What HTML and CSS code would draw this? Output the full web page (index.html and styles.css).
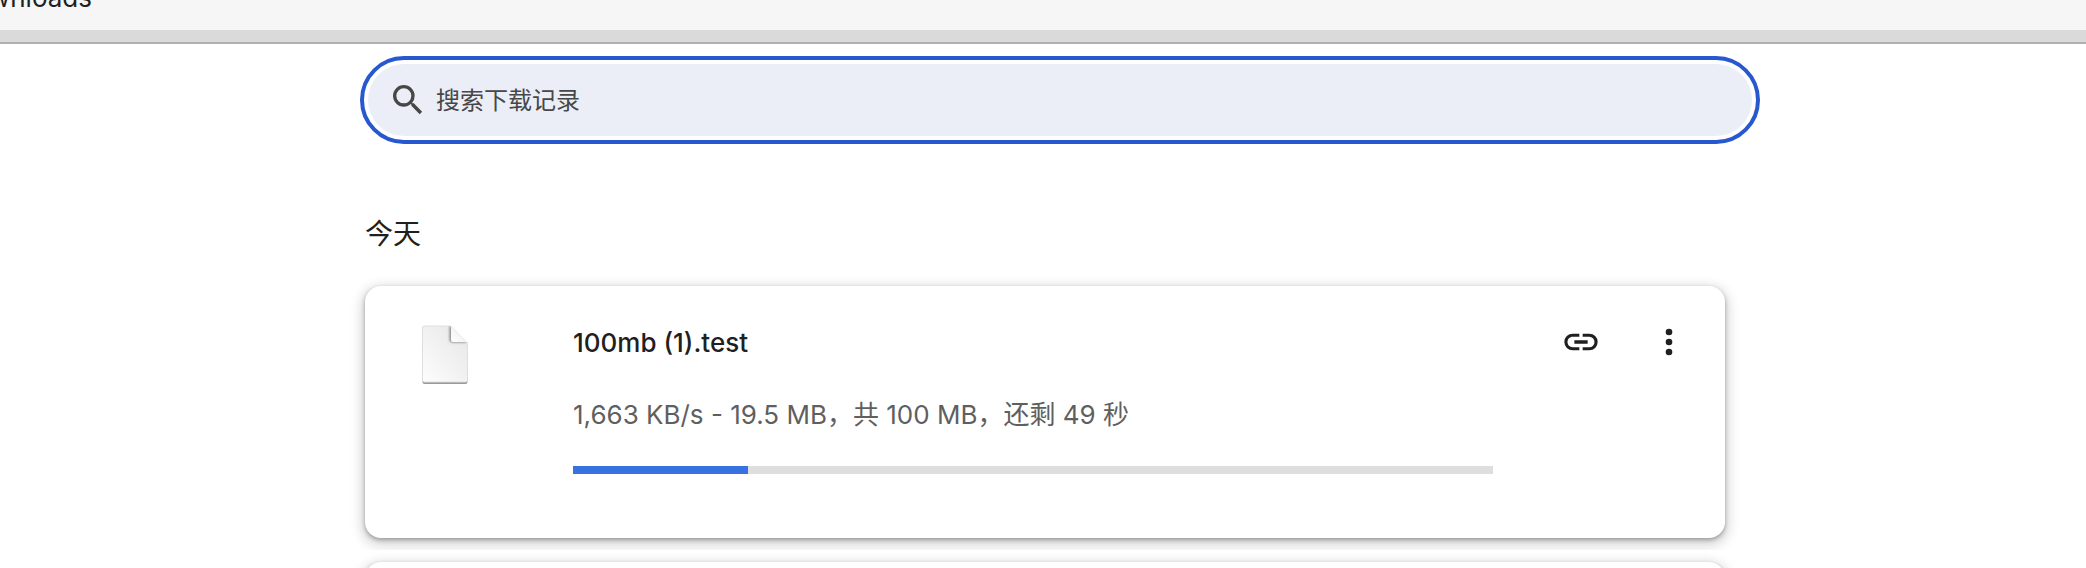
FILE: index.html
```html
<!DOCTYPE html>
<html lang="zh-CN">
<head>
<meta charset="utf-8">
<meta name="viewport" content="width=device-width, initial-scale=1">
<title>下载记录</title>
<link rel="stylesheet" href="styles.css">
</head>
<body>
<header class="address-bar">
  <div class="address"><span>Downloads</span></div>
</header>
<main class="page">
  <div class="toolbar">
    <form class="search" role="search">
      <label class="search-label" for="search" aria-label="搜索下载记录">
        <svg class="icon" viewBox="0 0 24 24" aria-hidden="true"><path d="M15.5 14h-.79l-.28-.27A6.47 6.47 0 0 0 16 9.5 6.5 6.5 0 1 0 9.5 16c1.61 0 3.09-.59 4.23-1.57l.27.28v.79l5 4.99L20.49 19l-4.99-5zm-6 0a4.5 4.5 0 1 1 0-9 4.5 4.5 0 0 1 0 9z"/></svg>
      </label>
      <input class="search-input" id="search" type="text" placeholder="搜索下载记录">
    </form>
  </div>
  <section class="group">
    <div class="item">
      <h2 class="date">今天</h2>
      <article class="card">
        <svg class="file-icon" viewBox="0 0 64 64" aria-hidden="true">
          <defs>
            <linearGradient id="paper" x1="0" y1="1" x2="1" y2="0"><stop offset="0" stop-color="#fdfdfd"/><stop offset="1" stop-color="#e6e6e6"/></linearGradient>
            <linearGradient id="fold" x1="0" y1="1" x2="1" y2="0"><stop offset="0" stop-color="#ffffff"/><stop offset="1" stop-color="#e8e8e8"/></linearGradient>
            <filter id="soft" x="-30%" y="-30%" width="160%" height="160%"><feGaussianBlur stdDeviation="1"/></filter>
            <clipPath id="sheet"><path d="M12 3h25.500l17 17v38a2 2 0 0 1-2 2h-41a2 2 0 0 1-2-2V5a2 2 0 0 1 2-2z"/></clipPath>
          </defs>
          <path d="M11.500 4h26l17 17v38a2 2 0 0 1-2 2h-41a2 2 0 0 1-2-2V6a2 2 0 0 1 2-2z" fill="#999"/>
          <path d="M11.500 3h26l17 17v37a2 2 0 0 1-2 2h-41a2 2 0 0 1-2-2V5a2 2 0 0 1 2-2z" fill="url(#paper)" stroke="#dedede"/>
          <g clip-path="url(#sheet)"><path d="M37 3v14a2 2 0 0 0 2 2h14z" fill="#888" stroke="#888" stroke-width="1" filter="url(#soft)"/></g>
          <path d="M38 3v14a2 2 0 0 0 2 2h14z" fill="url(#fold)"/>
        </svg>
        <div class="content">
          <h3 class="name">100mb (1).test</h3>
          <p class="status">1,663 KB/s - 19.5 MB，共 100 MB，还剩 49 秒</p>
          <div class="progress" role="progressbar" aria-label="100mb (1).test" aria-valuenow="19" aria-valuemin="0" aria-valuemax="100"><div class="progress-fill" style="width:19%"></div></div>
        </div>
        <div class="actions">
          <button class="icon-button" type="button" aria-label="复制下载链接"><svg class="icon" viewBox="0 0 24 24" aria-hidden="true"><path d="M3.900 12c0-1.710 1.390-3.100 3.100-3.100h4V7H7a5 5 0 0 0 0 10h4v-1.900H7c-1.710 0-3.100-1.390-3.100-3.100zM8 13h8v-2H8v2zm9-6h-4v1.900h4a3.100 3.100 0 0 1 0 6.200h-4V17h4a5 5 0 0 0 0-10z"/></svg></button>
          <button class="icon-button" type="button" aria-label="更多操作"><svg class="icon" viewBox="0 0 24 24" aria-hidden="true"><circle cx="12" cy="6" r="2"/><circle cx="12" cy="12" r="2"/><circle cx="12" cy="18" r="2"/></svg></button>
        </div>
      </article>
    </div>
    <div class="item">
      <article class="card"></article>
    </div>
  </section>
</main>
</body>
</html>
```
FILE: styles.css
```css
* {
  box-sizing: border-box;
}

body {
  margin: 0;
  height: 100vh;
  display: flex;
  flex-direction: column;
  overflow: hidden;
  background: #fff;
  color: #1f1f1f;
  font-family: Inter, "Noto Sans CJK SC", sans-serif;
  font-size: 26px;
}

h2, h3, p {
  margin: 0;
}

.address-bar {
  flex: none;
  display: flex;
  align-items: flex-end;
  height: 44px;
  padding-bottom: 28px;
  overflow: hidden;
  background: #f6f6f6;
  border-bottom: 2px solid #b0b0b0;
  box-shadow: inset 0 -12px #dadada;
}

.address {
  display: flex;
  justify-content: flex-end;
  width: 92px;
  line-height: 32px;
}

.page {
  flex: 1;
  min-height: 0;
  overflow: hidden;
  padding: 20px 0 0 4px;
}

.toolbar {
  padding: 0 32px 0 62px;
}

.search {
  display: flex;
  align-items: center;
  gap: 8px;
  max-width: 1384px;
  height: 72px;
  margin: 0 auto;
  padding: 0 20px;
  border-radius: 36px;
  background: #ebeef7;
  outline: 4px solid #2858cf;
  outline-offset: 4px;
}

.search-label {
  display: flex;
  color: #474747;
}

.search-input {
  flex: 1;
  min-width: 0;
  padding: 0;
  border: 0;
  outline: 0;
  background: transparent;
  color: #474747;
  font: inherit;
  font-size: 24px;
}

.search-input::placeholder {
  color: #474747;
  opacity: 1;
}

.icon {
  display: block;
  width: 40px;
  height: 40px;
  fill: currentColor;
}

.group {
  padding-top: 64px;
}

.item {
  overflow: hidden;
  padding: 12px 32px;
}

.date {
  max-width: 1360px;
  margin: 0 auto 30px;
  font-size: 28px;
  line-height: 44px;
  font-weight: 400;
}

.card {
  display: flex;
  align-items: flex-start;
  max-width: 1360px;
  min-height: 252px;
  margin: 0 auto;
  padding: 24px 24px 32px 48px;
  border-radius: 16px;
  background: #fff;
  box-shadow: 0 2px 4px rgba(0, 0, 0, 0.3), 0 4px 12px 4px rgba(0, 0, 0, 0.15);
}

.file-icon {
  flex: none;
  width: 64px;
  height: 64px;
  margin-top: 13px;
}

.content {
  flex: 1;
  min-width: 0;
  margin: 16px 56px 0 96px;
}

.name {
  font-size: 26px;
  line-height: 34px;
  font-weight: 500;
}

.status {
  margin-top: 35px;
  line-height: 40px;
  color: #5f5f5f;
}

.progress {
  height: 8px;
  margin-top: 31px;
  background: #dedede;
}

.progress-fill {
  height: 100%;
  background: #3871e0;
}

.actions {
  display: flex;
  gap: 24px;
}

.icon-button {
  display: grid;
  place-items: center;
  width: 64px;
  height: 64px;
  padding: 0;
  border: 0;
  border-radius: 50%;
  background: transparent;
  color: #1f1f1f;
}
```
